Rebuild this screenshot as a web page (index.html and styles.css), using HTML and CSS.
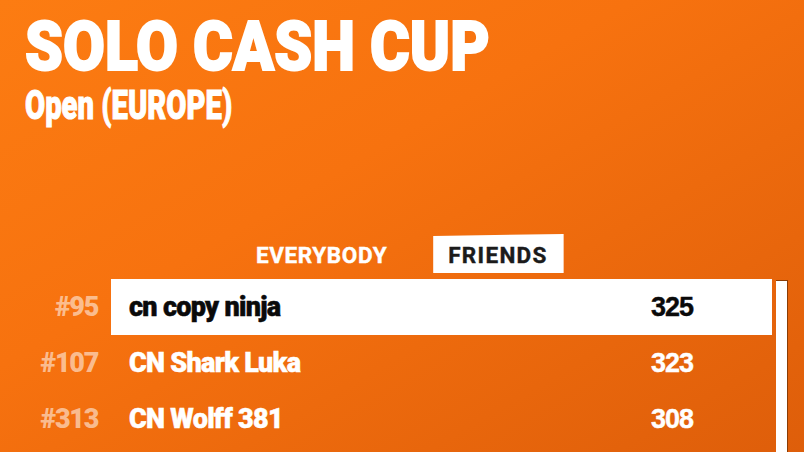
FILE: index.html
```html
<!DOCTYPE html>
<html>
<head>
<meta charset="utf-8">
<link rel="stylesheet" href="styles.css">
</head>
<body>
<div class="screen">
  <header class="head">
    <h1 class="title"><span class="squeeze">SOLO CASH CUP</span></h1>
    <h2 class="subtitle"><span class="squeeze-sub">Open (EUROPE)</span></h2>
  </header>
  <nav class="tabs">
    <div class="tab">EVERYBODY</div>
    <div class="tab tab-active">FRIENDS</div>
  </nav>
  <section class="board">
    <div class="list">
      <div class="row row-me">
        <div class="rank">#95</div>
        <div class="cell"><span class="name">cn copy ninja</span><span class="score">325</span></div>
      </div>
      <div class="row">
        <div class="rank">#107</div>
        <div class="cell"><span class="name">CN Shark Luka</span><span class="score">323</span></div>
      </div>
      <div class="row">
        <div class="rank">#313</div>
        <div class="cell"><span class="name">CN Wolff 381</span><span class="score">308</span></div>
      </div>
      <div class="row">
        <div class="rank"></div>
        <div class="cell"></div>
      </div>
    </div>
    <div class="scrollbar"></div>
  </section>
</div>
</body>
</html>
```
FILE: styles.css
```css
html, body {
  margin: 0;
  padding: 0;
  width: 804px;
  height: 452px;
  overflow: hidden;
}
.screen {
  width: 804px;
  height: 452px;
  overflow: hidden;
  background: linear-gradient(150deg, #fc7c12 0%, #f7720f 40%, #de5e0a 100%);
  display: flex;
  flex-direction: column;
}
.head {
  padding: 12px 0 0 25px;
  height: 114px;
}
.title {
  margin: 0;
  font-family: Roboto, "DejaVu Sans Condensed", sans-serif;
  font-weight: 900;
  font-size: 69px;
  line-height: 70px;
  color: #fff;
  -webkit-text-stroke: 2px #fff;
  white-space: nowrap;
}
.squeeze {
  display: inline-block;
  transform: scaleX(0.88);
  transform-origin: left center;
}
.subtitle {
  margin: 4px 0 0 0;
  font-family: Roboto, "DejaVu Sans Condensed", sans-serif;
  font-weight: 900;
  font-size: 40px;
  line-height: 40px;
  color: #fff;
  -webkit-text-stroke: 1px #fff;
  white-space: nowrap;
}
.squeeze-sub {
  display: inline-block;
  transform: scaleX(0.73);
  transform-origin: left center;
}
.tabs {
  display: flex;
  align-items: center;
  padding-left: 242px;
  margin-top: 108px;
  height: 39px;
  gap: 32px;
}
.tab {
  font-family: Roboto, "Liberation Sans", sans-serif;
  font-weight: 700;
  font-size: 22.5px;
  letter-spacing: 0.6px;
  color: #fff;
  -webkit-text-stroke: 0.4px currentColor;
  padding: 4px 14px 0 14px;
  height: 35px;
  line-height: 35px;
}
.tab-active {
  background: #fff;
  color: #1b1b1b;
  padding: 4px 16px 0 15px;
  letter-spacing: 1.3px;
  clip-path: polygon(0 2px, 100% 0, 100% 100%, 0 100%);
}
.board {
  display: flex;
  margin-top: 6px;
  flex: 1;
}
.list {
  width: 772px;
}
.row {
  display: flex;
  height: 56px;
}
.rank {
  width: 98px;
  padding-right: 13px;
  text-align: right;
  font-family: Roboto, "DejaVu Sans Condensed", sans-serif;
  font-weight: 900;
  font-size: 27px;
  letter-spacing: -1.3px;
  line-height: 56px;
  color: rgba(255, 255, 255, 0.55);
}
.cell {
  flex: 1;
  display: flex;
  align-items: center;
  justify-content: space-between;
  padding: 0 79px 0 18px;
  color: #fff;
}
.row-me .cell {
  background: #fff;
  color: #0a0a0a;
}
.name {
  font-family: Roboto, "DejaVu Sans Condensed", sans-serif;
  font-weight: 900;
  font-size: 27px;
  letter-spacing: -0.7px;
  line-height: 56px;
  -webkit-text-stroke: 0.5px currentColor;
}
.score {
  font-family: "Liberation Sans", Arial, sans-serif;
  font-weight: 700;
  font-size: 27px;
  line-height: 56px;
  letter-spacing: -1px;
  -webkit-text-stroke: 0.4px currentColor;
}
.scrollbar {
  width: 11px;
  margin-left: 4px;
  margin-top: 1px;
  background: #fff;
  border-top: 1px solid #8a3c05;
  border-right: 1px solid #8a3c05;
}
```
